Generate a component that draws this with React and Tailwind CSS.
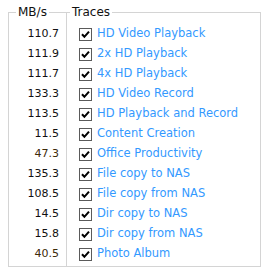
import React from 'react';

const TRACES = [
  { mbs: '110.7', label: 'HD Video Playback' },
  { mbs: '111.9', label: '2x HD Playback' },
  { mbs: '111.7', label: '4x HD Playback' },
  { mbs: '133.3', label: 'HD Video Record' },
  { mbs: '113.5', label: 'HD Playback and Record' },
  { mbs: '11.5', label: 'Content Creation' },
  { mbs: '47.3', label: 'Office Productivity', warm: true },
  { mbs: '135.3', label: 'File copy to NAS' },
  { mbs: '108.5', label: 'File copy from NAS' },
  { mbs: '14.5', label: 'Dir copy to NAS' },
  { mbs: '15.8', label: 'Dir copy from NAS' },
  { mbs: '40.5', label: 'Photo Album', warm: true },
];

const Check = () => (
  <span className="flex w-[13px] h-[13px] shrink-0 items-center justify-center border border-[#5a5a5a] bg-white">
    <svg width="9" height="9" viewBox="0 0 9 9">
      <path d="M1 4.2 L3.4 6.8 L8 1.6" fill="none" stroke="#000" strokeWidth="2" />
    </svg>
  </span>
);

export default function App() {
  return (
    <div className="flex bg-white pl-2 pt-1 h-[267px] overflow-hidden text-[11px] font-['DejaVu_Sans',sans-serif]">
      <fieldset className="w-[58px] shrink-0 border border-r-0 border-[#d4d4d4] pb-8">
        <legend className="ml-[7px] px-[2px] leading-4 text-[12px] text-[#111]">MB/s</legend>
        <div className="flex flex-col pt-[4px] pr-[7px]">
          {TRACES.map((t) => (
            <div
              key={t.label}
              className={`h-5 flex items-center justify-end ${t.warm ? 'text-[#3d2a0a]' : 'text-[#111]'}`}
            >
              {t.mbs}
            </div>
          ))}
        </div>
      </fieldset>
      <fieldset className="w-[195px] shrink-0 border border-[#d4d4d4] pb-8">
        <legend className="ml-[3px] px-[2px] leading-4 text-[12px] text-[#111]">Traces</legend>
        <div className="flex flex-col pt-[4px] pl-[12px]">
          {TRACES.map((t) => (
            <label key={t.label} className="h-5 flex items-center gap-[5px] text-[11.5px] text-[#3399ff] whitespace-nowrap">
              <Check />
              <span>{t.label}</span>
            </label>
          ))}
        </div>
      </fieldset>
    </div>
  );
}
